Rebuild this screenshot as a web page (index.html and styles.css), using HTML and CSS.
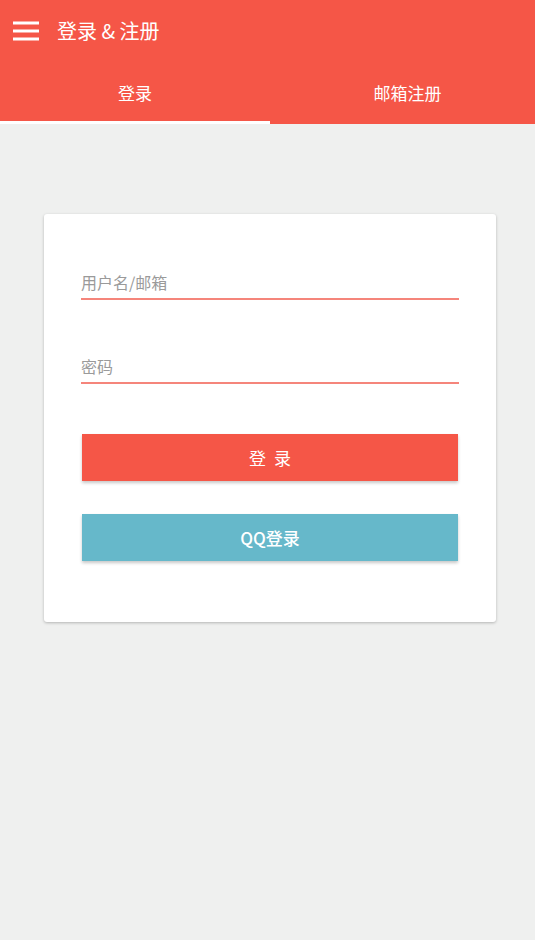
FILE: index.html
```html
<!DOCTYPE html>
<html lang="zh-CN">
<head>
<meta charset="utf-8">
<title>登录 &amp; 注册</title>
<link rel="stylesheet" href="styles.css">
</head>
<body>
<header class="appbar">
  <div class="toolbar">
    <svg class="menu" width="26" height="20" viewBox="0 0 26 20"><rect x="0" y="0.5" width="26" height="3" fill="#fff"/><rect x="0" y="8.5" width="26" height="3" fill="#fff"/><rect x="0" y="16.5" width="26" height="3" fill="#fff"/></svg>
    <span class="title">登录 &amp; 注册</span>
  </div>
  <nav class="tabs">
    <div class="tab active">登录</div>
    <div class="tab right">邮箱注册</div>
  </nav>
</header>
<main class="content">
  <section class="card">
    <div class="field"><span class="placeholder">用户名/邮箱</span></div>
    <div class="field second"><span class="placeholder">密码</span></div>
    <button class="btn btn-login">登 录</button>
    <button class="btn btn-qq">QQ登录</button>
  </section>
</main>
</body>
</html>
```
FILE: styles.css
```css
* { box-sizing: border-box; }
html, body { margin: 0; padding: 0; }
body {
  width: 535px;
  min-height: 940px;
  background: #eff0ef;
  font-family: "Noto Sans CJK SC", "Noto Sans", Roboto, sans-serif;
}
.appbar {
  background: #f55647;
  color: #fff;
}
.toolbar {
  height: 62px;
  display: flex;
  align-items: center;
  padding-left: 13px;
}
.menu { display: block; margin-right: 18px; }
.title { font-size: 20px; line-height: 24px; }
.tabs {
  display: flex;
  height: 62px;
}
.tab {
  font-size: 17px;
  display: flex;
  align-items: center;
  justify-content: center;
  padding-top: 2px;
}
.tab.active {
  width: 270px;
  border-bottom: 3px solid #fff;
}
.tab.right {
  flex: 1;
  padding-left: 10px;
  border-bottom: 3px solid transparent;
}
.content {
  padding: 90px 39px 0 44px;
}
.card {
  background: #fff;
  border-radius: 3px;
  box-shadow: 0 1px 3px rgba(0,0,0,0.25);
  padding: 50px 37px 61px 37px;
  display: flex;
  flex-direction: column;
}
.field {
  height: 36px;
  padding-top: 8px;
  border-bottom: 2px solid #f5857b;
}
.field.second { margin-top: 48px; }
.placeholder {
  display: block;
  font-size: 16px;
  line-height: 20px;
  color: #9a9a9a;
}
.btn {
  border: 0;
  margin: 0 1px;
  height: 47px;
  color: #fff;
  font-family: "Noto Sans CJK SC", "Noto Sans", Roboto, sans-serif;
  font-size: 17px;
  box-shadow: 0 2px 3px rgba(0,0,0,0.22);
  padding: 0;
}
.btn-login {
  margin-top: 50px;
  background: #f55647;
  letter-spacing: 2px;
  text-indent: 2px;
}
.btn-qq {
  margin-top: 33px;
  background: #66b8ca;
  font-weight: 500;
}
```
